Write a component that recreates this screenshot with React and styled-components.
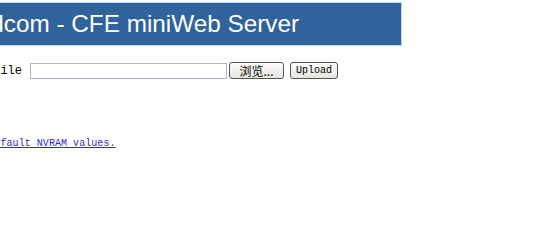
import React from "react";
import styled, { createGlobalStyle } from "styled-components";

const GlobalStyle = createGlobalStyle`
  html, body {
    margin: 0;
    padding: 0;
    background: #ffffff;
    overflow: hidden;
  }
`;

const Page = styled.div`
  margin-left: -64px;
  padding-top: 2px;
  width: 620px;
`;

const Header = styled.div`
  width: 466px;
  height: 44px;
  background: #30629b;
  border: 1px solid #c6d6e8;
  padding: 1px 0 0 0;
  box-sizing: border-box;

  h1 {
    margin: 0 0 0 2px;
    font-family: "Liberation Sans", Arial, sans-serif;
    font-weight: normal;
    font-size: 24.3px;
    line-height: 40px;
    color: #ffffff;
    white-space: nowrap;
  }
`;

const UploadRow = styled.form`
  display: flex;
  align-items: center;
  margin-top: 16px;
  height: 17px;
`;

const Label = styled.span`
  width: 86px;
  text-align: right;
  font-family: "Liberation Mono", "Courier New", monospace;
  font-size: 12px;
  color: #000;
  padding-right: 8px;
`;

const FileBox = styled.input`
  width: 197px;
  height: 16px;
  box-sizing: border-box;
  border: 1px solid #a9b8c8;
  background: #fff;
  padding: 0;
  margin: 0;
`;

const Button = styled.button`
  height: 17px;
  box-sizing: border-box;
  margin: 0 0 0 ${({ $gap }) => $gap}px;
  padding: 0;
  width: ${({ $w }) => $w}px;
  border: 1px solid #555;
  border-radius: 3px;
  background: linear-gradient(#fdfdfb, #e6e6e0);
  font-family: ${({ $cjk }) =>
    $cjk
      ? '"Noto Sans CJK SC", "Liberation Mono", sans-serif'
      : '"Liberation Mono", monospace'};
  font-size: ${({ $cjk }) => ($cjk ? "12px" : "10px")};
  line-height: 14px;
  color: #000;
  white-space: nowrap;
`;

const Restore = styled.a`
  display: inline-block;
  margin: 59px 0 0 4px;
  font-family: "Liberation Mono", "Courier New", monospace;
  font-size: 10px;
  letter-spacing: 0.05px;
  color: #2b2bd0;
  text-decoration: underline;
`;

export default function App() {
  return (
    <>
      <GlobalStyle />
      <Page>
        <Header>
          <h1>Broadcom - CFE miniWeb Server</h1>
        </Header>
        <UploadRow>
          <Label>File</Label>
          <FileBox type="text" readOnly />
          <Button type="button" $cjk $gap={2} $w={55}>
            浏览...
          </Button>
          <Button type="submit" $gap={6} $w={48}>
            Upload
          </Button>
        </UploadRow>
        <Restore href="#">Restore default NVRAM values.</Restore>
      </Page>
    </>
  );
}
